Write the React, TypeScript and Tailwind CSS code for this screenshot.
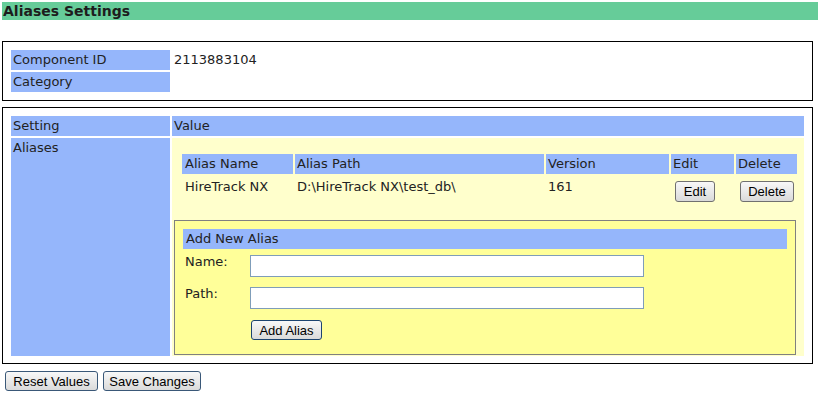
import React from "react";

const btnBase =
  "font-['Liberation_Sans',Arial,sans-serif] text-[13px] leading-none text-black whitespace-nowrap rounded-[3px] border bg-linear-to-b from-[#f8f8f8] to-[#dadada] flex items-center justify-center";

export default function App() {
  return (
    <div className="w-[818px] h-[394px] bg-white font-['DejaVu_Sans',Verdana,sans-serif] text-[13px] text-[#222] overflow-hidden">
      <div className="pt-[2px] pl-[2px]">
        <div className="h-[18px] bg-[#66cc99] font-bold text-[14px] leading-[19px] pl-[1px] text-[#1d1d1d]">
          Aliases Settings
        </div>
      </div>

      {/* Box 1 */}
      <div className="mt-[21px] ml-[2px] w-[811px] border border-black p-[8px] grid grid-cols-[159px_632px] gap-[2px]">
        <div className="h-[20px] leading-[20px] bg-[#95b6fb] pl-[2px]">Component ID</div>
        <div className="h-[20px] leading-[20px] pl-[2px]">2113883104</div>
        <div className="h-[20px] leading-[20px] bg-[#95b6fb] pl-[2px]">Category</div>
        <div className="h-[20px] leading-[20px] pl-[2px]"></div>
      </div>

      {/* Box 2 */}
      <div className="mt-[6px] ml-[2px] w-[811px] border border-black pt-[8px] px-[8px] pb-[7px] grid grid-cols-[159px_632px] gap-[2px]">
        <div className="h-[20px] leading-[20px] bg-[#95b6fb] pl-[2px]">Setting</div>
        <div className="h-[20px] leading-[20px] bg-[#95b6fb] pl-[2px]">Value</div>
        <div className="bg-[#95b6fb] pl-[2px] leading-[20px]">Aliases</div>
        <div className="bg-[#ffffcc] pt-[16px]">
          <div className="pl-[10px]">
            <div className="grid grid-cols-[111px_249px_123px_63px_61px] gap-[2px]">
              <div className="h-[20px] leading-[20px] bg-[#95b6fb] pl-[3px]">Alias Name</div>
              <div className="h-[20px] leading-[20px] bg-[#95b6fb] pl-[2px]">Alias Path</div>
              <div className="h-[20px] leading-[20px] bg-[#95b6fb] pl-[2px]">Version</div>
              <div className="h-[20px] leading-[20px] bg-[#95b6fb] pl-[2px]">Edit</div>
              <div className="h-[20px] leading-[20px] bg-[#95b6fb] pl-[2px]">Delete</div>

              <div className="h-[30px] pt-[1px] leading-[19px] pl-[3px]">HireTrack NX</div>
              <div className="h-[30px] pt-[1px] leading-[19px] pl-[2px]">{"D:\\HireTrack NX\\test_db\\"}</div>
              <div className="h-[30px] pt-[1px] leading-[19px] pl-[2px]">161</div>
              <div className="h-[30px] pt-[5px] pl-[4px]">
                <button className={`${btnBase} h-[21px] w-[40px] border-[#707070]`}>Edit</button>
              </div>
              <div className="h-[30px] pt-[5px] pl-[4px]">
                <button className={`${btnBase} h-[21px] w-[54px] border-[#707070]`}>Delete</button>
              </div>
            </div>
          </div>

          <div className="ml-[2px] mt-[14px] mb-[1px] w-[622px] h-[135px] border border-[#808080] bg-[#ffff99] p-[8px]">
            <div className="h-[20px] leading-[20px] bg-[#95b6fb] pl-[3px]">Add New Alias</div>
            <div className="mt-[2px] flex pb-[4px]">
              <div className="w-[67px] pl-[2px] pt-[1px] leading-[19px]">Name:</div>
              <div className="mt-[4px] w-[394px] h-[22px] border border-[#7f9db9] bg-white"></div>
            </div>
            <div className="mt-[2px] flex pb-[4px]">
              <div className="w-[67px] pl-[2px] pt-[1px] leading-[19px]">Path:</div>
              <div className="mt-[4px] w-[394px] h-[22px] border border-[#7f9db9] bg-white"></div>
            </div>
            <div className="mt-[7px] pl-[68px]">
              <button className={`${btnBase} h-[20px] w-[71px] border-[#1c4470]`}>Add Alias</button>
            </div>
          </div>
        </div>
      </div>

      <div className="mt-[7px] ml-[5px] flex gap-[5px]">
        <button className={`${btnBase} h-[20px] w-[93px] border-[#3a5878]`}>Reset Values</button>
        <button className={`${btnBase} h-[20px] w-[98px] border-[#3a5878]`}>Save Changes</button>
      </div>
    </div>
  );
}
